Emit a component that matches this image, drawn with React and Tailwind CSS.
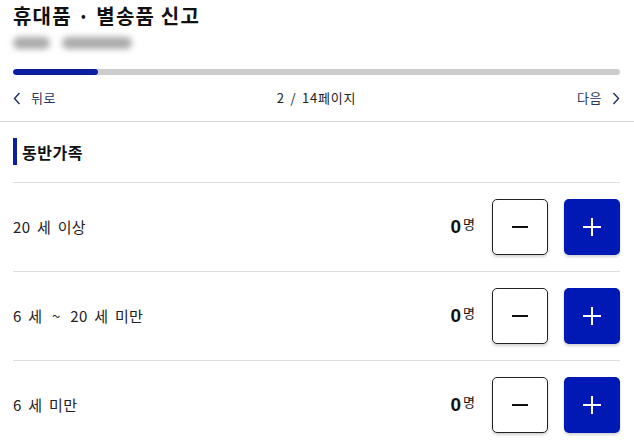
import React from "react";

const KR = { fontFamily: '"Noto Sans CJK KR", "Noto Sans", sans-serif' };

function Chevron({ dir }) {
  return (
    <svg width="8" height="13" viewBox="0 0 8 13" className="shrink-0">
      {dir === "left" ? (
        <polyline points="6.5,1 1.5,6.5 6.5,12" fill="none" stroke="#1f2d6b" strokeWidth="1.4" />
      ) : (
        <polyline points="1.5,1 6.5,6.5 1.5,12" fill="none" stroke="#1f2d6b" strokeWidth="1.4" />
      )}
    </svg>
  );
}

function Row({ label }) {
  return (
    <div className="border-t border-[#dcdcdc] py-4 flex items-center">
      <div className="flex-1 text-[15px] text-[#222] whitespace-pre tracking-[0.3px] [word-spacing:3px]" style={KR}>{label}</div>
      <div className="flex items-start mr-[17px]">
        <span className="text-[19px] leading-[20px] font-bold text-[#111]" style={{ fontFamily: '"Liberation Sans", Arial, sans-serif' }}>0</span>
        <span className="text-[13px] leading-[14px] ml-[2px] text-[#111]" style={KR}>명</span>
      </div>
      <button className="w-[56px] h-[56px] rounded-[5px] border border-[#222] bg-white shadow-[0_2px_3px_rgba(0,0,0,0.18)] flex items-center justify-center">
        <span className="block w-[16px] h-[2px] bg-[#111]" />
      </button>
      <button className="ml-4 w-[56px] h-[56px] rounded-[5px] bg-[#0019b5] shadow-[0_2px_3px_rgba(0,0,0,0.18)] flex items-center justify-center">
        <svg width="18" height="18" viewBox="0 0 18 18">
          <line x1="9" y1="0" x2="9" y2="18" stroke="white" strokeWidth="2" />
          <line x1="0" y1="9" x2="18" y2="9" stroke="white" strokeWidth="2" />
        </svg>
      </button>
    </div>
  );
}

export default function App() {
  return (
    <div className="w-[634px] h-[446px] overflow-hidden bg-white" style={KR}>
      <div className="border-b border-[#d4d4d4] h-[122px] pl-[13px] pr-[14px]">
        <h1 className="pt-[2px] text-[20px] leading-[28px] font-bold text-[#111] tracking-[1.2px]">휴대품 · 별송품 신고</h1>
        <div className="h-[26px] flex items-center gap-[12px]">
          <span className="block w-[37px] h-[12px] rounded-full bg-[#a9a9a9] blur-[3px]" />
          <span className="block w-[70px] h-[12px] rounded-full bg-[#a9a9a9] blur-[3px]" />
        </div>
        <div className="mt-[13px] h-[6px] rounded-full bg-[#cccccc] overflow-hidden">
          <div className="h-full w-[85px] rounded-full bg-[#0b1fa0]" />
        </div>
        <div className="h-[46px] flex items-center text-[13px]">
          <div className="flex-1 flex items-center gap-[10px] text-[#26335f]">
            <Chevron dir="left" />
            <span className="tracking-[0.5px]">뒤로</span>
          </div>
          <div className="flex-1 text-center text-[#222] tracking-[0.8px] [word-spacing:2px]">2 / 14페이지</div>
          <div className="flex-1 flex items-center justify-end gap-[10px] text-[#26335f]">
            <span className="tracking-[0.5px]">다음</span>
            <Chevron dir="right" />
          </div>
        </div>
      </div>
      <div className="pl-[13px] pr-[14px]">
        <div className="pt-[16px] pb-[17px] flex items-center">
          <span className="block w-[4px] h-[27px] bg-[#0b1fa0]" />
          <span className="ml-[5px] text-[16px] font-bold text-[#111] tracking-[0.5px]">동반가족</span>
        </div>
        <Row label="20 세 이상" />
        <Row label={<>6 세 <span className="mx-[3px]">~</span> 20 세 미만</>} />
        <Row label="6 세 미만" />
      </div>
    </div>
  );
}
